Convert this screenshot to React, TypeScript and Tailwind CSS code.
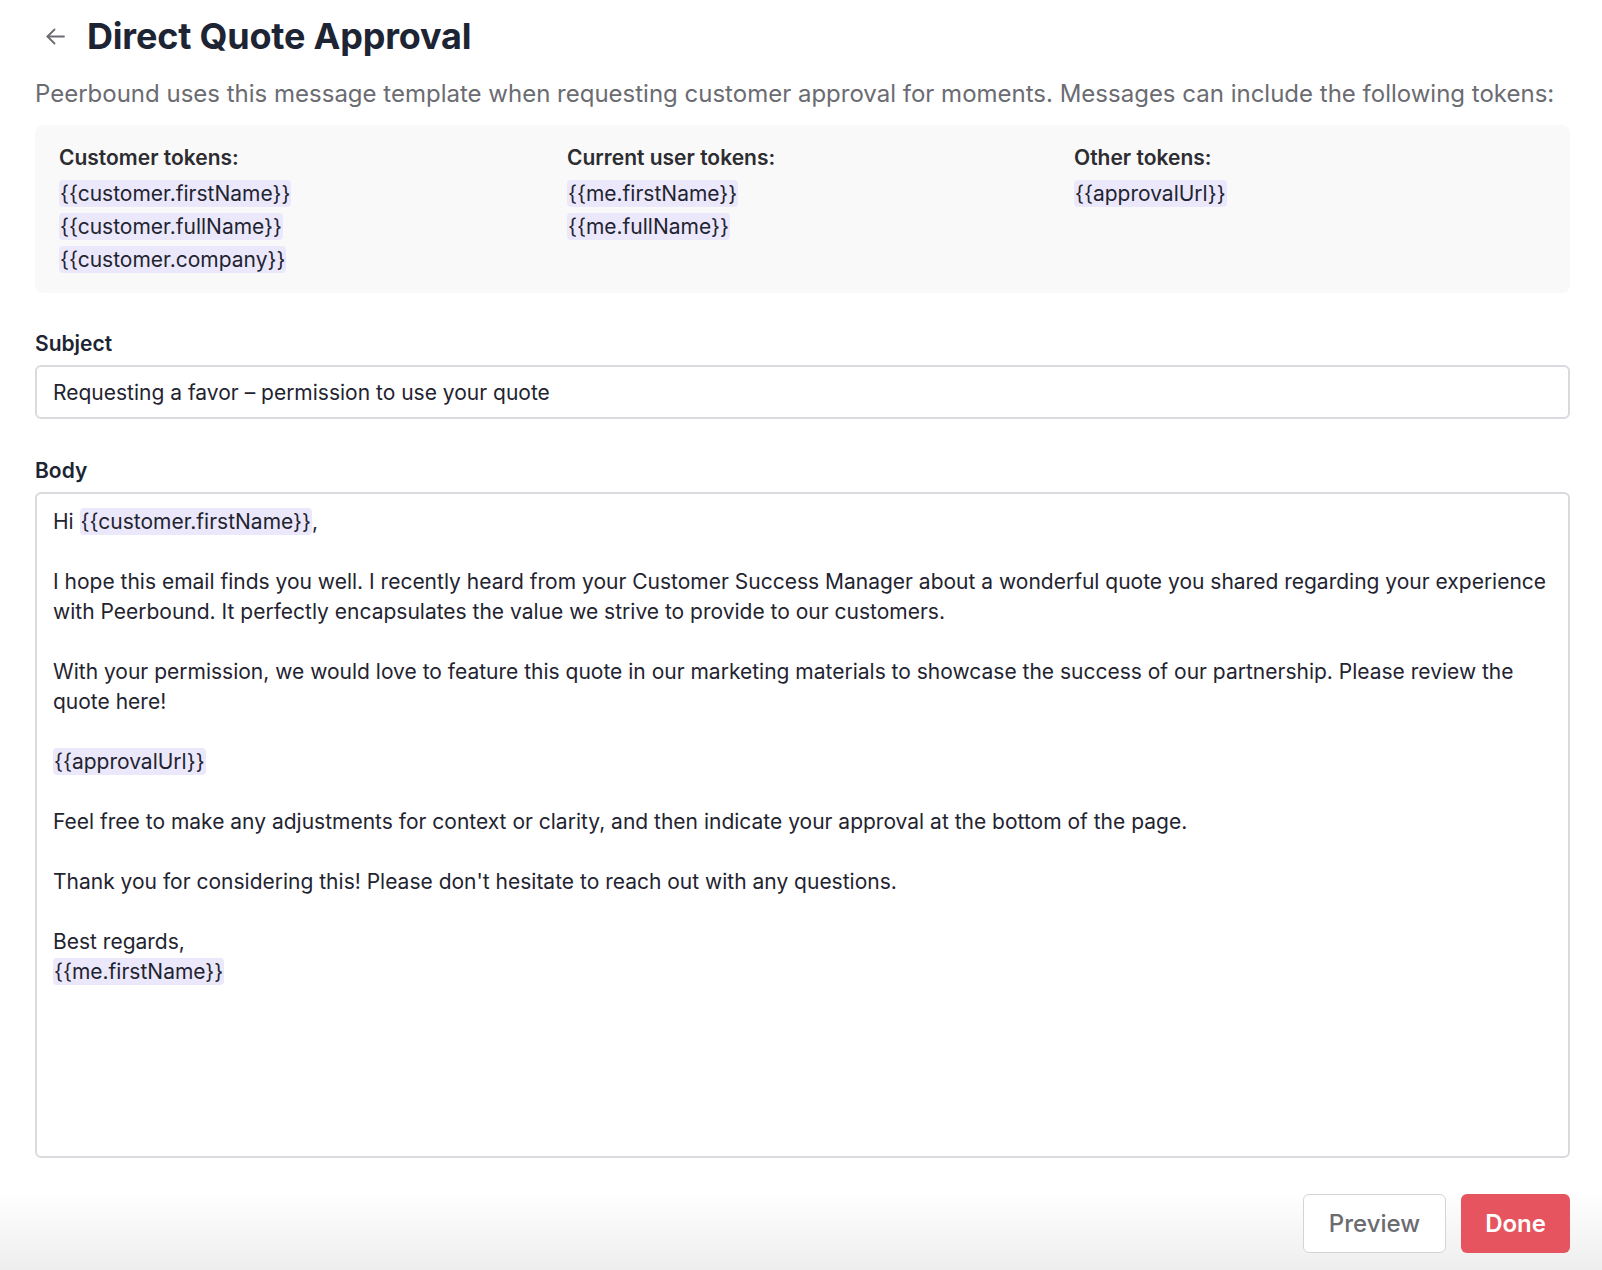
import React from "react";

function Token({ children }: { children: React.ReactNode }) {
  return (
    <span className="rounded-[4px] bg-[#ebe8fb] px-[1px] py-[1px]">{children}</span>
  );
}

function TokenColumn({ title, tokens }: { title: string; tokens: string[] }) {
  return (
    <div>
      <div className="mb-[5px] text-[21px] font-semibold leading-[28px] text-[#2c2c31]">{title}</div>
      {tokens.map((t) => (
        <div key={t} className="text-[21px] leading-[33px] text-[#1f2430]">
          <Token>{t}</Token>
        </div>
      ))}
    </div>
  );
}

const Blank = () => <div className="h-[30px]" />;

export default function App() {
  return (
    <div
      className="min-h-[1270px] w-full bg-white"
      style={{ fontFamily: "Inter, 'Noto Sans', 'Liberation Sans', sans-serif" }}
    >
      <div className="pl-[35px] pr-[32px]">
        <div className="mt-[16px] flex h-[40px] items-center">
          <button className="ml-[11px] mr-[22px] flex h-[20px] w-[19px] items-center justify-center">
            <svg width="19" height="17" viewBox="0 0 19 17" fill="none" stroke="#6b6b72" strokeWidth="1.8" strokeLinecap="round" strokeLinejoin="round">
              <path d="M18 8.5H1.5" />
              <path d="M8.5 1.5L1.5 8.5L8.5 15.5" />
            </svg>
          </button>
          <h1 className="text-[36px] font-bold leading-[40px] tracking-[-0.2px] text-[#1d2433]">Direct Quote Approval</h1>
        </div>

        <p className="mt-[22px] text-[24px] leading-[32px] text-[#6b6b72]">
          Peerbound uses this message template when requesting customer approval for moments. Messages can include the following tokens:
        </p>

        <div className="mt-[15px] grid grid-cols-[508px_507px_1fr] rounded-[8px] bg-[#f9f9f9] pb-[17px] pl-[24px] pr-[24px] pt-[19px]">
          <TokenColumn
            title="Customer tokens:"
            tokens={["{{customer.firstName}}", "{{customer.fullName}}", "{{customer.company}}"]}
          />
          <TokenColumn title="Current user tokens:" tokens={["{{me.firstName}}", "{{me.fullName}}"]} />
          <TokenColumn title="Other tokens:" tokens={["{{approvalUrl}}"]} />
        </div>

        <div className="mt-[37px] text-[21px] font-semibold leading-[28px] text-[#1d2433]">Subject</div>
        <div className="mt-[7px] flex h-[54px] items-center rounded-[6px] border-2 border-[#dadade] px-[16px] pt-[1px] text-[21px] text-[#1f2430]">
          Requesting a favor – permission to use your quote
        </div>

        <div className="mt-[38px] text-[21px] font-semibold leading-[28px] text-[#1d2433]">Body</div>
        <div className="mt-[7px] h-[666px] rounded-[6px] border-2 border-[#dadade] px-[16px] pt-[13px] text-[21px] leading-[30px] text-[#1f2430]">
          <div>
            Hi <Token>{"{{customer.firstName}}"}</Token>,
          </div>
          <Blank />
          <div>
            I hope this email finds you well. I recently heard from your Customer Success Manager about a wonderful quote you shared regarding your experience with Peerbound. It perfectly encapsulates the value we strive to provide to our customers.
          </div>
          <Blank />
          <div>
            With your permission, we would love to feature this quote in our marketing materials to showcase the success of our partnership. Please review the quote here!
          </div>
          <Blank />
          <div>
            <Token>{"{{approvalUrl}}"}</Token>
          </div>
          <Blank />
          <div>
            Feel free to make any adjustments for context or clarity, and then indicate your approval at the bottom of the page.
          </div>
          <Blank />
          <div>Thank you for considering this! Please don't hesitate to reach out with any questions.</div>
          <Blank />
          <div>Best regards,</div>
          <div>
            <Token>{"{{me.firstName}}"}</Token>
          </div>
        </div>
      </div>

      <div className="flex justify-end gap-[15px] bg-gradient-to-b from-white from-30% to-[#eeeeee] pb-[17px] pl-[35px] pr-[32px] pt-[36px]">
        <button className="h-[59px] rounded-[6px] border border-[#d4d4d8] bg-white px-[25px] text-[24px] font-medium text-[#6b6b70]">
          Preview
        </button>
        <button className="h-[59px] rounded-[6px] bg-[#e6555f] px-[24px] text-[24px] font-semibold text-white">
          Done
        </button>
      </div>
    </div>
  );
}
